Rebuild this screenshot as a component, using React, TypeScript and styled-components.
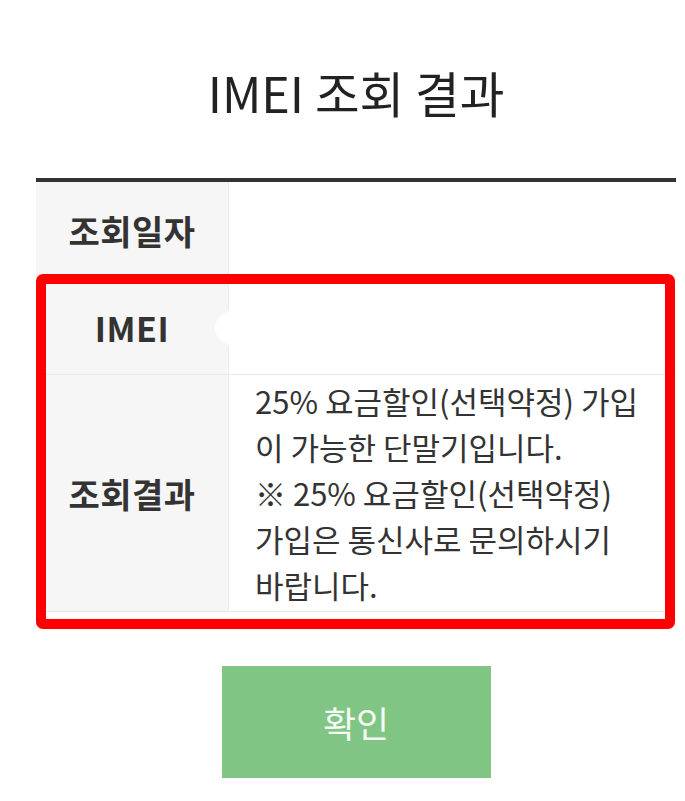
import styled, { createGlobalStyle } from "styled-components";

const GlobalStyle = createGlobalStyle`
  html, body {
    margin: 0;
    padding: 0;
    background: #fff;
  }
  body {
    font-family: "Noto Sans CJK KR", "Noto Sans", sans-serif;
    color: #333;
  }
`;

const rows = [
  { label: "조회일자", value: "", height: 98 },
  { label: "IMEI", value: "", height: 95 },
];

const Page = styled.div`
  padding: 64px 9px 0 36px;
  display: flex;
  flex-direction: column;
  align-items: center;
`;

const Title = styled.h1`
  margin: 0 0 58px;
  font-size: 48.5px;
  line-height: 56px;
  font-weight: 400;
  color: #222;
  text-align: center;
`;

const Table = styled.div`
  width: 100%;
  border-top: 4px solid #333;
`;

const Row = styled.div<{ $h?: number }>`
  display: grid;
  grid-template-columns: 193px 1fr;
  min-height: ${(p) => (p.$h ? `${p.$h - 1}px` : "auto")};
  border-bottom: 1px solid #e8e8e8;
`;

const Head = styled.div`
  background: #f6f6f6;
  border-right: 1px solid #ececec;
  display: flex;
  align-items: center;
  justify-content: center;
  font-size: 34px;
  font-weight: 700;
  color: #333;
  letter-spacing: 0.5px;
`;

const Cell = styled.div`
  position: relative;
  padding: 3px 31px 3px 26px;
  font-size: 31px;
  line-height: 46px;
  color: #333;
  display: flex;
  align-items: center;
`;

const Smudge = styled.span`
  position: absolute;
  left: -14px;
  top: 30px;
  width: 44px;
  height: 36px;
  border-radius: 50%;
  background: #fff;
`;

const Highlight = styled.div`
  position: relative;

  &::after {
    content: "";
    position: absolute;
    top: -6px;
    left: 0;
    right: 1px;
    bottom: -17px;
    border: 10px solid #ff0000;
    border-radius: 7px;
    pointer-events: none;
  }
`;

const ConfirmButton = styled.button`
  margin-top: 54px;
  width: 269px;
  height: 112px;
  border: none;
  background: #80c584;
  color: #f4fbf4;
  font-family: "Noto Sans CJK KR", "Noto Sans", sans-serif;
  font-size: 36px;
  font-weight: 400;
  cursor: pointer;
`;

export default function App() {
  return (
    <>
      <GlobalStyle />
      <Page>
        <Title>IMEI 조회 결과</Title>
        <Table>
          <Row $h={rows[0].height}>
            <Head>{rows[0].label}</Head>
            <Cell>{rows[0].value}</Cell>
          </Row>
          <Highlight>
            <Row $h={rows[1].height}>
              <Head>{rows[1].label}</Head>
              <Cell>
                <Smudge />
                {rows[1].value}
              </Cell>
            </Row>
            <Row>
              <Head>조회결과</Head>
              <Cell>
                <div>
                  25% 요금할인(선택약정) 가입이 가능한 단말기입니다.
                  <br />※ 25% 요금할인(선택약정)
                  <br />
                  가입은 통신사로 문의하시기 바랍니다.
                </div>
              </Cell>
            </Row>
          </Highlight>
        </Table>
        <ConfirmButton>확인</ConfirmButton>
      </Page>
    </>
  );
}
